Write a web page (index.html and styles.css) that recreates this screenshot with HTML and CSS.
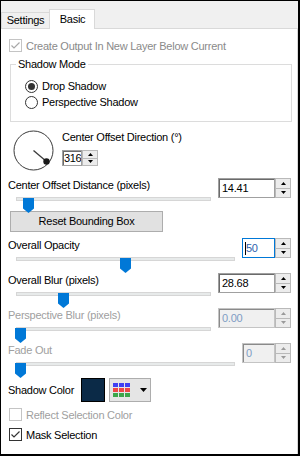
FILE: index.html
```html
<!DOCTYPE html>
<html>
<head>
<meta charset="utf-8">
<link rel="stylesheet" href="styles.css">
</head>
<body>
<div class="frame">
  <div class="tabs">
    <div class="tab">Settings</div>
    <div class="tab active">Basic</div>
    <div class="tab-fill"></div>
  </div>
  <div class="panel">
    <div class="check disabled first">
      <span class="box checked"><svg width="11" height="11" viewBox="0 0 11 11"><path d="M1.5 5.5 L4 8 L9.5 2.5" fill="none" stroke="currentColor" stroke-width="1.2"/></svg></span>
      <span>Create Output In New Layer Below Current</span>
    </div>

    <fieldset class="group">
      <legend>Shadow Mode</legend>
      <div class="radio first-radio"><span class="circle on"></span><span>Drop Shadow</span></div>
      <div class="radio"><span class="circle"></span><span>Perspective Shadow</span></div>
    </fieldset>

    <div class="dial-row">
      <svg class="dial" width="41" height="41" viewBox="0 0 41 41">
        <circle cx="20.5" cy="20.5" r="19.5" fill="#fff" stroke="#3a3a3a" stroke-width="1"/>
        <line x1="20.5" y1="20.5" x2="33.5" y2="31.5" stroke="#3a3a3a" stroke-width="1.3"/>
        <circle cx="33.5" cy="31.5" r="3.2" fill="#1a1a1a"/>
      </svg>
      <div class="dial-side">
        <div class="label">Center Offset Direction (°)</div>
        <div class="spin small">
          <div class="field">316</div>
          <div class="arrows">
            <span class="btn"><svg width="5" height="3" viewBox="0 0 5 3"><polygon points="0,3 2.5,0 5,3"/></svg></span>
            <span class="btn"><svg width="5" height="3" viewBox="0 0 5 3"><polygon points="0,0 5,0 2.5,3"/></svg></span>
          </div>
        </div>
      </div>
    </div>

    <div class="param dist">
      <div class="param-main">
        <div class="label">Center Offset Distance (pixels)</div>
        <div class="slider"><div class="track"></div><div class="thumb" style="left:8px"></div></div>
      </div>
      <div class="spin wide">
        <div class="field">14.41</div>
        <div class="arrows">
          <span class="btn"><svg width="5" height="3" viewBox="0 0 5 3"><polygon points="0,3 2.5,0 5,3"/></svg></span>
          <span class="btn"><svg width="5" height="3" viewBox="0 0 5 3"><polygon points="0,0 5,0 2.5,3"/></svg></span>
        </div>
      </div>
    </div>

    <div class="button reset">Reset Bounding Box</div>

    <div class="param after-button">
      <div class="param-main">
        <div class="label">Overall Opacity</div>
        <div class="slider"><div class="track"></div><div class="thumb" style="left:105px"></div></div>
      </div>
      <div class="spin narrow focus">
        <div class="field"><span class="caret"></span>50</div>
        <div class="arrows">
          <span class="btn"><svg width="5" height="3" viewBox="0 0 5 3"><polygon points="0,3 2.5,0 5,3"/></svg></span>
          <span class="btn"><svg width="5" height="3" viewBox="0 0 5 3"><polygon points="0,0 5,0 2.5,3"/></svg></span>
        </div>
      </div>
    </div>

    <div class="param">
      <div class="param-main">
        <div class="label">Overall Blur (pixels)</div>
        <div class="slider"><div class="track"></div><div class="thumb" style="left:43px"></div></div>
      </div>
      <div class="spin wide">
        <div class="field">28.68</div>
        <div class="arrows">
          <span class="btn"><svg width="5" height="3" viewBox="0 0 5 3"><polygon points="0,3 2.5,0 5,3"/></svg></span>
          <span class="btn"><svg width="5" height="3" viewBox="0 0 5 3"><polygon points="0,0 5,0 2.5,3"/></svg></span>
        </div>
      </div>
    </div>

    <div class="param disabled">
      <div class="param-main">
        <div class="label">Perspective Blur (pixels)</div>
        <div class="slider"><div class="track"></div><div class="thumb" style="left:0px"></div></div>
      </div>
      <div class="spin wide">
        <div class="field">0.00</div>
        <div class="arrows">
          <span class="btn"><svg width="5" height="3" viewBox="0 0 5 3"><polygon points="0,3 2.5,0 5,3"/></svg></span>
          <span class="btn"><svg width="5" height="3" viewBox="0 0 5 3"><polygon points="0,0 5,0 2.5,3"/></svg></span>
        </div>
      </div>
    </div>

    <div class="param disabled">
      <div class="param-main">
        <div class="label">Fade Out</div>
        <div class="slider"><div class="track"></div><div class="thumb" style="left:0px"></div></div>
      </div>
      <div class="spin narrow">
        <div class="field">0</div>
        <div class="arrows">
          <span class="btn"><svg width="5" height="3" viewBox="0 0 5 3"><polygon points="0,3 2.5,0 5,3"/></svg></span>
          <span class="btn"><svg width="5" height="3" viewBox="0 0 5 3"><polygon points="0,0 5,0 2.5,3"/></svg></span>
        </div>
      </div>
    </div>

    <div class="color-row">
      <span class="color-label">Shadow Color</span>
      <span class="swatch"></span>
      <span class="button picker">
        <svg width="17" height="14" viewBox="0 0 17 14">
          <rect x="0" y="0" width="5" height="4" fill="#3f3ff2"/>
          <rect x="6" y="0" width="5" height="4" fill="#3f3ff2"/>
          <rect x="12" y="0" width="5" height="4" fill="#3f3ff2"/>
          <rect x="0" y="5" width="5" height="4" fill="#ee4646"/>
          <rect x="6" y="5" width="5" height="4" fill="#ee4646"/>
          <rect x="12" y="5" width="5" height="4" fill="#ee4646"/>
          <rect x="0" y="10" width="5" height="4" fill="#3da54a"/>
          <rect x="6" y="10" width="5" height="4" fill="#3da54a"/>
          <rect x="12" y="10" width="5" height="4" fill="#3da54a"/>
        </svg>
        <svg class="drop" width="7" height="4" viewBox="0 0 7 4"><polygon points="0,0 7,0 3.5,4"/></svg>
      </span>
    </div>

    <div class="check disabled reflect">
      <span class="box"></span>
      <span>Reflect Selection Color</span>
    </div>

    <div class="check mask">
      <span class="box checked"><svg width="11" height="11" viewBox="0 0 11 11"><path d="M1.5 5.5 L4 8 L9.5 2.5" fill="none" stroke="currentColor" stroke-width="1.2"/></svg></span>
      <span>Mask Selection</span>
    </div>
  </div>
</div>
</body>
</html>
```

FILE: styles.css
```css
body {
  margin: 0;
  font-family: "Liberation Sans", Arial, sans-serif;
  font-size: 11px;
  letter-spacing: -0.25px;
  color: #000;
}

.frame {
  width: 300px;
  height: 456px;
  box-sizing: border-box;
  border-style: solid;
  border-color: #000;
  border-width: 1px 2px 2px 1px;
  background: #f0f0f0;
  display: flex;
  flex-direction: column;
}

.tabs {
  flex: none;
  height: 28px;
  display: flex;
  align-items: flex-end;
}

.tab {
  box-sizing: border-box;
  width: 48px;
  height: 17px;
  border: 1px solid #d9d9d9;
  border-right: none;
  background: #f0f0f0;
  line-height: 15px;
  text-align: center;
}

.tab.active {
  width: 46px;
  height: 20px;
  border-right: 1px solid #d9d9d9;
  border-bottom: none;
  background: #fff;
  line-height: 18px;
  padding-left: 1px;
}

.tab-fill {
  flex: 1;
  height: 1px;
  background: #d9d9d9;
}

.panel {
  flex: 1;
  background: #fff;
  border-right: 1px solid #d9d9d9;
  padding: 10px 6px 0 7px;
}

/* checkboxes */
.check {
  display: flex;
  align-items: center;
  height: 13px;
  gap: 4px;
}

.box {
  box-sizing: border-box;
  width: 13px;
  height: 13px;
  margin-left: 1px;
  border: 1px solid #333;
  background: #fff;
  color: #333;
  display: flex;
}

.check.disabled {
  color: #a0a0a0;
}

.check.first {
  color: #8a8a8a;
}

.check.disabled .box {
  border-color: #c4c4c4;
  color: #a8a8a8;
}

.check.reflect {
  margin-top: 6px;
}

.check.mask {
  margin-top: 7px;
}

/* group box */
.group {
  margin: 6px -1px 0 2px;
  padding: 0 0 11px 5px;
  border: 1px solid #dcdcdc;
}

.group legend {
  padding: 0 2px;
  line-height: 13px;
}

.radio {
  display: flex;
  align-items: center;
  height: 16px;
  gap: 4px;
  margin-left: 9px;
}

.first-radio {
  margin-top: 7px;
}

.circle {
  box-sizing: border-box;
  width: 13px;
  height: 13px;
  border: 1px solid #333;
  border-radius: 50%;
  background: #fff;
  display: flex;
  align-items: center;
  justify-content: center;
}

.circle.on::after {
  content: "";
  width: 7px;
  height: 7px;
  border-radius: 50%;
  background: #333;
}

/* dial */
.dial-row {
  display: flex;
  margin-top: 8px;
  height: 41px;
}

.dial {
  margin-left: 5px;
  flex: none;
}

.dial-side {
  margin-left: 8px;
  padding-top: 1px;
}

.label {
  line-height: 14px;
  height: 14px;
  white-space: nowrap;
}

.dial-side .label {
  line-height: 13px;
  height: 13px;
}

/* spin boxes */
.spin {
  display: flex;
  height: 20px;
}

.spin .field {
  box-sizing: border-box;
  height: 100%;
  border: 1px solid #a0a0a0;
  box-shadow: inset 1px 1px 0 #6a6a6a;
  background: #fff;
  padding-left: 3px;
  line-height: 18px;
  display: flex;
  align-items: center;
  overflow: hidden;
  white-space: nowrap;
}

.spin.wide .field { width: 57px; }
.spin.narrow .field { width: 33px; }

.spin.small {
  margin-top: 6px;
  height: 16px;
}

.spin.small .field {
  width: 20px;
  padding-left: 1px;
  line-height: 14px;
  letter-spacing: -0.4px;
}

.spin.focus .field {
  border-color: #0078d7;
  box-shadow: none;
  color: #2d62ad;
  padding-left: 2px;
}

.caret {
  width: 1px;
  height: 13px;
  background: #000;
  margin-right: 0;
}

.arrows {
  width: 16px;
  display: flex;
  flex-direction: column;
}

.arrows .btn {
  box-sizing: border-box;
  flex: 1;
  border: 1px solid #b9b9b9;
  background: #ececec;
  display: flex;
  align-items: center;
  justify-content: center;
}

.arrows .btn + .btn {
  border-top: none;
}

.arrows svg polygon { fill: #000; }

/* parameter rows */
.param {
  display: grid;
  grid-template-columns: 1fr auto;
  column-gap: 6px;
  margin-top: 5px;
  height: 30px;
}

.param.dist {
  margin-top: 7px;
}

.param.after-button {
  margin-top: 6px;
}

.slider {
  position: relative;
  height: 16px;
  margin-left: 7px;
}

.track {
  box-sizing: border-box;
  height: 4px;
  margin: 5px 1px 0 1px;
  background: #e7eaea;
  border: 1px solid #d6d6d6;
}

.thumb {
  position: absolute;
  top: 1px;
  width: 11px;
  height: 15px;
  background: #0078d7;
  clip-path: polygon(0 0, 100% 0, 100% 70%, 50% 100%, 0 70%);
}

.param.disabled .label {
  color: #a0a0a0;
}

.param.disabled .field {
  background: #f0f0f0;
  color: #7f9cc4;
  border-color: #c4c4c4;
  box-shadow: inset 1px 1px 0 #8a8a8a;
}

.param.disabled .arrows svg polygon { fill: #9a9a9a; }

/* buttons */
.button {
  box-sizing: border-box;
  background: #e1e1e1;
  border: 1px solid #adadad;
}

.reset {
  width: 153px;
  height: 21px;
  margin: 3px 0 0 2px;
  line-height: 19px;
  text-align: center;
}

/* color row */
.color-row {
  display: flex;
  align-items: center;
  height: 24px;
  margin-top: 5px;
}

.color-label {
  width: 73px;
  flex: none;
  white-space: nowrap;
}

.swatch {
  box-sizing: border-box;
  width: 24px;
  height: 24px;
  border: 1px solid #000;
  background: #0b2a47;
}

.picker {
  width: 42px;
  height: 24px;
  margin-left: 4px;
  display: flex;
  align-items: center;
  padding-left: 3px;
  background: #e5e5e5;
}

.picker .drop {
  margin-left: 10px;
}

.picker .drop polygon { fill: #000; }
```
